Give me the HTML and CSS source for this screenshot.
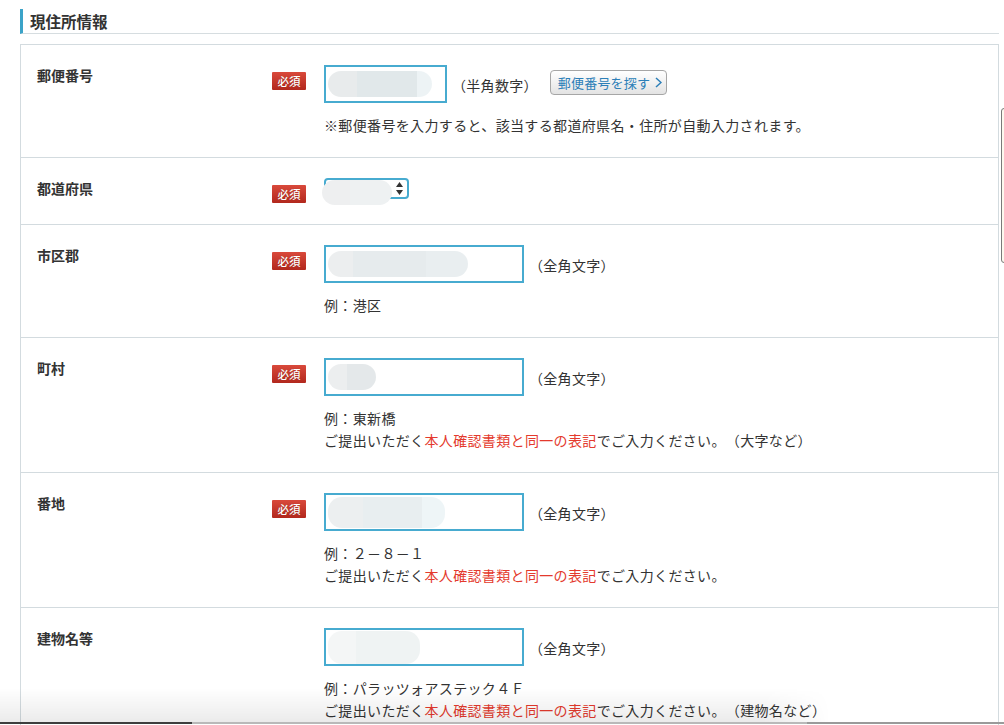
FILE: index.html
```html
<!DOCTYPE html>
<html lang="ja">
<head>
<meta charset="utf-8">
<title>現住所情報</title>
<link rel="stylesheet" href="styles.css">
</head>
<body>
<div class="page">
  <h2 class="heading">現住所情報</h2>
  <div class="table">
    <div class="row">
      <div class="label">郵便番号</div>
      <div class="req"><span class="badge">必須</span></div>
      <div class="field">
        <div class="line">
          <div class="box w-s"><span class="blob blob-zip"></span></div>
          <span class="unit">（半角数字）</span>
          <button class="search" type="button">郵便番号を探す<svg class="chev" width="7" height="11" viewBox="0 0 7 11"><polyline points="1,1 6,5.5 1,10" fill="none" stroke="#2c7fb8" stroke-width="1.5"/></svg></button>
        </div>
        <p class="note">※郵便番号を入力すると、該当する都道府県名・住所が自動入力されます。</p>
      </div>
    </div>
    <div class="row">
      <div class="label">都道府県</div>
      <div class="req"><span class="badge">必須</span></div>
      <div class="field">
        <div class="select">
          <span class="blob blob-pref"></span>
          <svg class="arrows" width="7" height="13" viewBox="0 0 7 13"><polygon points="3.5,0 7,5 0,5" fill="#333"/><polygon points="0,8 7,8 3.5,13" fill="#333"/></svg>
        </div>
      </div>
    </div>
    <div class="row">
      <div class="label">市区郡</div>
      <div class="req"><span class="badge">必須</span></div>
      <div class="field">
        <div class="line">
          <div class="box w-l"><span class="blob blob-city"></span></div>
          <span class="unit">（全角文字）</span>
        </div>
        <p class="note">例：港区</p>
      </div>
    </div>
    <div class="row">
      <div class="label">町村</div>
      <div class="req"><span class="badge">必須</span></div>
      <div class="field">
        <div class="line">
          <div class="box w-l"><span class="blob blob-town"></span></div>
          <span class="unit">（全角文字）</span>
        </div>
        <p class="note">例：東新橋</p>
        <p class="note">ご提出いただく<span class="red">本人確認書類と同一の表記</span>でご入力ください。（大字など）</p>
      </div>
    </div>
    <div class="row">
      <div class="label">番地</div>
      <div class="req"><span class="badge">必須</span></div>
      <div class="field">
        <div class="line">
          <div class="box w-l"><span class="blob blob-addr"></span></div>
          <span class="unit">（全角文字）</span>
        </div>
        <p class="note">例：２－８－１</p>
        <p class="note">ご提出いただく<span class="red">本人確認書類と同一の表記</span>でご入力ください。</p>
      </div>
    </div>
    <div class="row">
      <div class="label">建物名等</div>
      <div class="req"></div>
      <div class="field">
        <div class="line">
          <div class="box w-l"><span class="blob blob-bldg"></span></div>
          <span class="unit">（全角文字）</span>
        </div>
        <p class="note">例：パラッツォアステック４Ｆ</p>
        <p class="note">ご提出いただく<span class="red">本人確認書類と同一の表記</span>でご入力ください。（建物名など）</p>
      </div>
    </div>
  </div>
</div>
<div class="scroll-thumb"></div>
<div class="bottom-shade"></div>
<div class="bottom-line"><span class="seg seg-a"></span><span class="seg seg-b"></span><span class="seg seg-c"></span></div>
</body>
</html>
```

FILE: styles.css
```css
html, body {
  margin: 0;
  padding: 0;
  background: #ffffff;
  overflow: hidden;
}
body {
  font-family: "Noto Sans CJK JP", "Noto Sans", sans-serif;
  font-size: 14px;
  color: #333333;
  height: 725px;
  text-spacing-trim: space-all;
}
.page {
  padding: 9px 5px 0 20px;
}
.heading {
  margin: 0;
  height: 24px;
  display: flex;
  align-items: center;
  border-left: 3px solid #3ba3c8;
  border-bottom: 1px solid #d6dde0;
  padding-left: 7px;
  font-size: 15.5px;
  font-weight: bold;
  color: #333333;
  line-height: 24px;
}
.table {
  margin-top: 10px;
  border: 1px solid #d3dbdf;
}
.row {
  display: grid;
  grid-template-columns: 235px 52px 1fr;
  padding: 20px 16px 21px 16px;
  border-top: 1px solid #d3dbdf;
}
.row:first-child {
  border-top: none;
}
.label {
  font-weight: bold;
  line-height: 20px;
  font-size: 14px;
}
.req {
  padding-top: 7px;
}
.badge {
  display: block;
  width: 34px;
  height: 18px;
  line-height: 18px;
  text-align: center;
  font-size: 11.5px;
  font-weight: 500;
  color: #ffffff;
  background: linear-gradient(#d9493b, #b2281d);
  border-radius: 1px;
  text-shadow: 0 0 1px rgba(0,0,0,0.3);
}
.field {
  display: flex;
  flex-direction: column;
}
.line {
  display: flex;
  align-items: center;
  height: 38px;
}
.box {
  box-sizing: border-box;
  height: 38px;
  border: 2px solid #47abd0;
  background: #ffffff;
  display: flex;
  align-items: center;
  padding-left: 2px;
}
.w-s { width: 123px; }
.w-l { width: 200px; }
.blob {
  display: block;
  height: 27px;
  border-radius: 14px;
}
.blob-zip {
  width: 104px;
  height: 26px;
  background: linear-gradient(90deg, #e8ebec 0 28%, #e1e8ea 28% 86%, #edf3f5 86%);
}
.blob-city {
  width: 140px;
  height: 26px;
  background: linear-gradient(90deg, #eceeef 0 18%, #e6ebed 18% 70%, #e9eef0 70%);
}
.blob-town {
  width: 48px;
  height: 26px;
  background: linear-gradient(90deg, #eceeef 0 40%, #e4e8ea 40%);
}
.blob-addr {
  width: 117px;
  height: 31px;
  background: linear-gradient(90deg, #eceff0 0 30%, #e8eef0 30% 80%, #eef5f7 80%);
}
.blob-bldg {
  width: 92px;
  height: 33px;
  background: linear-gradient(90deg, #f4f6f6 0 30%, #eff3f3 30%);
}
.unit {
  margin-left: 5px;
  font-size: 14px;
  line-height: 20px;
  margin-top: 2px;
  letter-spacing: 0.3px;
}
.search {
  margin-left: 12px;
  margin-top: -3px;
  box-sizing: border-box;
  width: 117px;
  height: 25px;
  padding: 0 0 0 7px;
  display: flex;
  align-items: center;
  border: 1px solid #a6a6a6;
  border-radius: 4px;
  background: linear-gradient(#ffffff, #e3e3e3);
  color: #2c7fb8;
  font-family: "Noto Sans CJK JP", "Noto Sans", sans-serif;
  font-size: 13px;
  letter-spacing: 0.2px;
  line-height: 23px;
}
.chev {
  margin-left: 5px;
}
.note {
  margin: 0;
  line-height: 22px;
  font-size: 14px;
  letter-spacing: 0.35px;
}
.line + .note {
  margin-top: 11px;
}
.red {
  color: #e43a2d;
}
.select {
  position: relative;
  box-sizing: border-box;
  width: 85px;
  height: 21px;
  border: 2px solid #47abd0;
  border-radius: 4px;
  background: #ffffff;
}
.select .blob-pref {
  position: absolute;
  left: -4px;
  top: 0px;
  width: 70px;
  height: 25px;
  border-radius: 13px;
  background: linear-gradient(90deg, #eeeff0 0 40%, #eef1f2 40%);
}
.arrows {
  position: absolute;
  right: 4px;
  top: 2px;
}
.scroll-thumb {
  position: fixed;
  left: 1001px;
  top: 108px;
  width: 8px;
  height: 155px;
  box-sizing: border-box;
  border: 1px solid #7a7a7a;
  border-radius: 3px;
  background: #fcf9ef;
}
.bottom-shade {
  position: fixed;
  left: 0;
  bottom: 3px;
  width: 830px;
  height: 34px;
  background: linear-gradient(rgba(0,0,0,0), rgba(0,0,0,0.08));
  -webkit-mask-image: linear-gradient(90deg, #000 92%, transparent);
  mask-image: linear-gradient(90deg, #000 92%, transparent);
  pointer-events: none;
}
.bottom-line {
  position: fixed;
  left: 0;
  bottom: 1px;
  width: 1004px;
  height: 2px;
  display: flex;
}
.seg { display: block; height: 2px; }
.seg-a { width: 192px; background: #3e3e3e; }
.seg-b { width: 615px; background: #b9b9b9; }
.seg-c { flex: 1; background: #9a9a9a; }
```
